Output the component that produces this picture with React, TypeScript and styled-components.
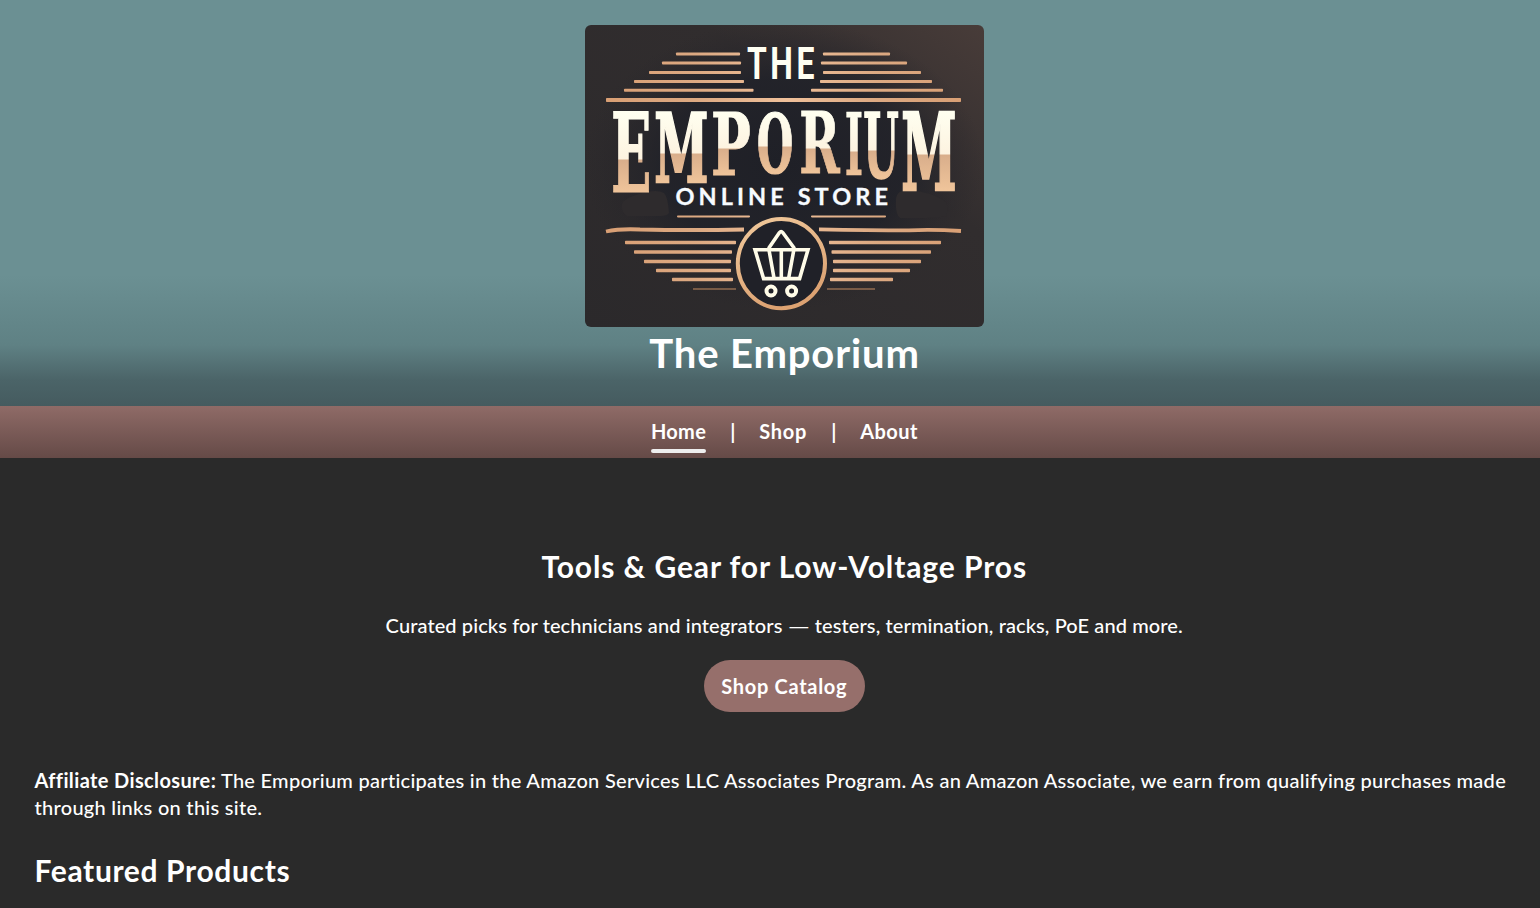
import React from "react";
import styled, { createGlobalStyle } from "styled-components";

const GlobalStyle = createGlobalStyle`
  * { box-sizing: border-box; }
  html { background: #2a2a2a; }
  body {
    margin: 0; background: #2a2a2a; color: #fff;
    font: 500 20px/27px Lato, "Noto Sans", sans-serif;
    font-variant-ligatures: none;
  }
`;

const Page = styled.div`height: 908px; overflow: hidden;`;
const Header = styled.header`
  height: 406px; padding: 25px 0 0 29px;
  display: flex; flex-direction: column; align-items: center;
  background: linear-gradient(180deg, #6b9093 0, #6b9093 275px, #5f8184 345px, #4b6468 380px, #455b5f 406px);
`;
const Logo = styled.svg`display: block; width: 399px; height: 302px; border-radius: 6px; flex: none;`;
const SiteTitle = styled.h1`
  margin: -1px 0 0; font-size: 40px; line-height: 54px; font-weight: 700; letter-spacing: 0.87px;
`;
const Nav = styled.nav`
  height: 52px; padding: 12px 0 0 29px;
  display: flex; justify-content: center; align-items: flex-start; gap: 24px;
  background: linear-gradient(180deg, #8f6b67, #654a47);
`;
const NavLink = styled.a<{ $active?: boolean; $spacing: number }>`
  display: flex; flex-direction: column; gap: 4px;
  font-weight: 700; letter-spacing: ${p => p.$spacing}px;
  &::after {
    content: ""; height: 4px; border-radius: 2px;
    background: ${p => (p.$active ? "#eee" : "transparent")};
  }
`;
const Divider = styled.span`width: 5px; text-align: center; font-weight: 700;`;
const Main = styled.main`padding: 0 6px 0 34.5px;`;
const Hero = styled.section`padding-top: 88px; display: flex; flex-direction: column; align-items: center;`;
const Heading = styled.h2<{ $spacing: number }>`
  margin: 0; font-size: 30px; line-height: 41px; font-weight: 700; letter-spacing: ${p => p.$spacing}px;
`;
const Lead = styled.p`margin: 25px 0 21px; letter-spacing: 0.1px;`;
const Dash = styled.span`display: inline-block; transform: scaleX(1.4); margin: 0 3px;`;
const ShopButton = styled.a`
  width: 161px; height: 52px; border-radius: 26px; background: #966f6b;
  display: flex; align-items: center; justify-content: center; font-weight: 700; letter-spacing: 0.7px;
`;
const Disclosure = styled.p`margin: 54.5px 0 29.5px; letter-spacing: 0.28px;`;
const Strong = styled.strong`font-weight: 700; letter-spacing: 0.37px;`;

// [x1, x2, y, thickness]
const stripes = [
  [676, 740, 54, 3], [662, 741, 63, 3], [649, 741, 72.5, 3], [634, 744, 81.5, 3], [624, 753.5, 90.3, 3],
  [823, 890, 54, 3], [821, 907, 63, 3], [823, 921, 72.5, 3], [820, 932, 81.5, 3], [811, 943, 90.3, 3],
  [606, 961, 100, 4],
  [677, 750, 216.4, 2], [811, 886, 216.4, 2],
  [625, 736, 242.5, 3.4], [634, 732, 252, 3.4], [644, 731, 261.5, 3.4], [656, 731, 270.5, 3.4], [672, 733, 279.5, 3.4],
  [829, 941, 242.5, 3.4], [831.5, 931, 252, 3.4], [833, 921, 261.5, 3.4], [833, 910, 270.5, 3.4], [830, 893, 279.5, 3.4],
];

// character, left edge, right edge, baseline, height of the colour change, glyph bearing, glyph width, outline
const letters: [string, number, number, number, number, number, number, number][] = [
  ["E", 614, 649, 192, 159, 5.5, 66, 1],
  ["M", 657, 706, 182, 153, 5.5, 100, 2.4],
  ["P", 714, 749, 175, 148, 5.5, 66, 1.2],
  ["O", 759, 791, 172.5, 146, 5.5, 76, 1.4],
  ["R", 802, 841, 173, 148, 5.5, 80, 1.2],
  ["I", 847, 861.5, 175, 151, 5.5, 37, 0.8],
  ["U", 864.5, 898, 177.5, 150, 3, 82, 1.6],
  ["M", 904, 954, 190, 154, 5.5, 100, 2.4],
];

const capHeight = 72.9;

function Wordmark() {
  return (
    <g fontFamily="DejaVu Serif" fontWeight="700" fontSize="100">
      {letters.map(([char, left, right, base, split, bearing, width, outline], i) => {
        const sx = (right - left) / width;
        const sy = (base - 112) / capHeight;
        return (
          <g key={i}>
            <linearGradient id={`letter${i}`} gradientUnits="userSpaceOnUse" x1="0" x2="0" y1={-capHeight} y2="0">
              <stop offset="0" stopColor="#fffff0" />
              <stop offset={(split - 112) / (base - 112)} stopColor="#fdf3e0" />
              <stop offset={(split - 111) / (base - 112)} stopColor="#d9ae8b" />
              <stop offset="1" stopColor="#efc49a" />
            </linearGradient>
            <text
              transform={`translate(${left - bearing * sx} ${base}) scale(${sx} ${sy})`}
              fill={`url(#letter${i})`} stroke={`url(#letter${i})`} strokeWidth={outline}
            >{char}</text>
          </g>
        );
      })}
    </g>
  );
}

function EmporiumLogo() {
  return (
    <Logo viewBox="585 25 399 302">
      <defs>
        <linearGradient id="board" x1="0" y1="1" x2="1" y2="0">
          <stop offset="0" stopColor="#2b292b" />
          <stop offset="0.65" stopColor="#312d2e" />
          <stop offset="1" stopColor="#483c39" />
        </linearGradient>
        <radialGradient id="shade">
          <stop offset="0" stopColor="#1f2027" />
          <stop offset="0.6" stopColor="#212229" stopOpacity="0.9" />
          <stop offset="1" stopColor="#28262a" stopOpacity="0" />
        </radialGradient>
        <linearGradient id="copper" gradientUnits="userSpaceOnUse" x1="606" x2="786" y1="0" y2="0" spreadMethod="reflect">
          <stop offset="0" stopColor="#d99f74" />
          <stop offset="0.5" stopColor="#dca982" />
          <stop offset="1" stopColor="#efc09a" />
        </linearGradient>
        <linearGradient id="ring" x1="0" y1="0" x2="0.4" y2="1">
          <stop offset="0" stopColor="#f0c99c" />
          <stop offset="1" stopColor="#dca272" />
        </linearGradient>
      </defs>
      <rect x="585" y="25" width="399" height="302" fill="url(#board)" />
      <ellipse cx="783" cy="165" rx="200" ry="145" fill="url(#shade)" />
      <path d="M622 204q1-5 14-9q20-7 28-2q4 4 5 20q-2 3-8 3h-34q-6-3-5-12ZM896 200q0-10 12-10q25 2 38 12q3 6 0 14q-12 3-46 2q-5-4-4-18Z" fill="#2e2b2d" />
      {stripes.map(([x1, x2, y, h], i) => (
        <rect key={i} x={x1} y={y - h / 2} width={x2 - x1} height={h} rx="0.8" fill="url(#copper)" />
      ))}
      <path d="M606 231.5q14-3 34-2q50 1 104 0M819 229.3q50 1 90 1q25-1 52 0.7" fill="none" stroke="url(#copper)" strokeWidth="3.8" />
      <path d="M693 289h43M827 289h48" stroke="#a27655" strokeWidth="2.2" opacity="0.65" />
      <text x="747" y="79" textLength="71" lengthAdjust="spacingAndGlyphs" fontFamily="Roboto" fontWeight="700" fontSize="45" letterSpacing="5" fill="#fffff2">THE</text>
      <Wordmark />
      <text x="675.5" y="204.6" textLength="212.5" lengthAdjust="spacing" fontFamily="Lato" fontWeight="700" fontSize="23.5" fill="#f7fbff" stroke="#f7fbff" strokeWidth="0.3">ONLINE STORE</text>
      <ellipse cx="781.4" cy="263.6" rx="43.6" ry="44.6" fill="#202128" stroke="url(#ring)" strokeWidth="4" />
      <g fill="none" stroke="#fffce8" strokeWidth="3.6" strokeLinejoin="round">
        <path d="M768.5 248.5 779.5 232.5q1.6-2 3.2 0L794.5 248.5" />
        <path d="M755 249.7H808L799.6 278.6H763.6Z" strokeLinejoin="miter" />
        <path d="M769 250 774 278M781.3 250V278M793.8 250 788.7 278" />
        <circle cx="771" cy="291" r="4.5" strokeWidth="4" />
        <circle cx="791.6" cy="291" r="4.5" strokeWidth="4" />
      </g>
    </Logo>
  );
}

export default function App() {
  return (
    <Page>
      <GlobalStyle />
      <Header>
        <EmporiumLogo />
        <SiteTitle>The Emporium</SiteTitle>
      </Header>
      <Nav>
        <NavLink $active $spacing={0.3}>Home</NavLink>
        <Divider>|</Divider>
        <NavLink $spacing={0.75}>Shop</NavLink>
        <Divider>|</Divider>
        <NavLink $spacing={0.5}>About</NavLink>
      </Nav>
      <Main>
        <Hero>
          <Heading $spacing={0.9}>Tools &amp; Gear for Low-Voltage Pros</Heading>
          <Lead>Curated picks for technicians and integrators <Dash>—</Dash> testers, termination, racks, PoE and more.</Lead>
          <ShopButton>Shop Catalog</ShopButton>
        </Hero>
        <Disclosure>
          <Strong>Affiliate Disclosure:</Strong> The Emporium participates in the Amazon Services LLC Associates Program. As an Amazon Associate, we earn from qualifying purchases made through links on this site.
        </Disclosure>
        <Heading $spacing={0.64}>Featured Products</Heading>
      </Main>
    </Page>
  );
}
